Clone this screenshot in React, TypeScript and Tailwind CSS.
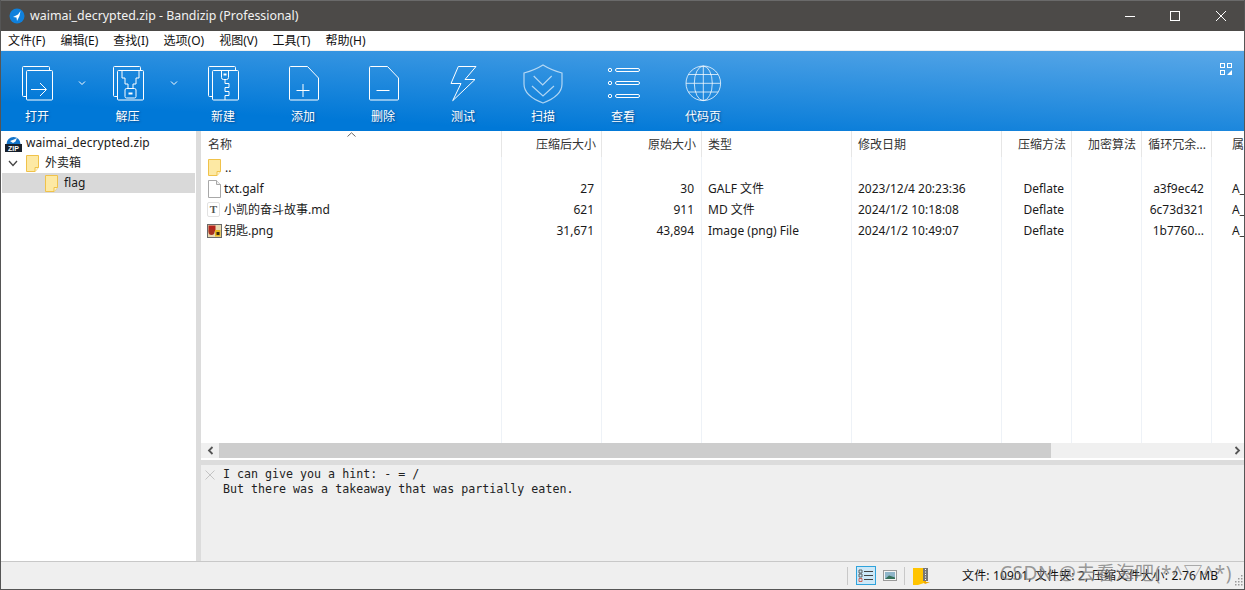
const menus = ["文件(F)", "编辑(E)", "查找(I)", "选项(O)", "视图(V)", "工具(T)", "帮助(H)"];

const sw = { fill: "none", stroke: "white", strokeWidth: 1 };

function OpenIcon() {
  return (
    <svg width="40" height="40" viewBox="0 0 40 40" {...sw}>
      <path d="M9 32.5H6.5a1 1 0 0 1-1-1V3.5a1 1 0 0 1 1-1h25a1 1 0 0 1 1 1V6" />
      <rect x="9.5" y="6.5" width="26" height="29.5" rx="1" />
      <path d="M14 25.5H29M23 19l6.5 6.5L23 32" />
    </svg>
  );
}

function ExtractIcon() {
  return (
    <svg width="40" height="40" viewBox="0 0 40 40" {...sw}>
      <path d="M9 32.5H6.5a1 1 0 0 1-1-1V3.5a1 1 0 0 1 1-1h25a1 1 0 0 1 1 1V6" />
      <rect x="9.5" y="6.5" width="26" height="29.5" rx="1" />
      <path d="M14 6.5v7.5h3v6h3v4M31 6.5v7.5h-3v6h-3v4" />
      <rect x="17" y="24.5" width="11" height="9.5" rx="1.5" />
      <path d="M20.5 29.5h4" strokeWidth="2" />
    </svg>
  );
}

function NewIcon() {
  return (
    <svg width="40" height="40" viewBox="0 0 40 40" {...sw}>
      <path d="M9 32.5H6.5a1 1 0 0 1-1-1V3.5a1 1 0 0 1 1-1h25a1 1 0 0 1 1 1V6" />
      <rect x="9.5" y="6.5" width="26" height="29.5" rx="1" />
      <path d="M18.5 6.5v7a2 2 0 0 0 2 2h3a2 2 0 0 0 2-2v-7" />
      <path d="M20.5 10.5h3" strokeWidth="2" />
      <path d="M22 15.5v4h4v4h-4v4h4v4h-4v4.5" />
    </svg>
  );
}

function PageIcon({ plus }: { plus?: boolean }) {
  return (
    <svg width="40" height="40" viewBox="0 0 40 40" {...sw}>
      <path d="M7.5 2.5H24.5L35.5 14V35a1 1 0 0 1-1 1H7.5a1 1 0 0 1-1-1V3.5a1 1 0 0 1 1-1z" />
      <path d="M13.5 26.5h13" />
      {plus && <path d="M20 20v13" />}
    </svg>
  );
}

function BoltIcon() {
  return (
    <svg width="40" height="40" viewBox="0 0 40 40" {...sw}>
      <path d="M15.3 2.5H33L22 15.5H32L9.7 36.7L18 19.5H8z" />
    </svg>
  );
}

function ShieldIcon() {
  return (
    <svg width="40" height="40" viewBox="0 0 40 40" fill="none" stroke="white" strokeOpacity="0.65" strokeWidth="1.2">
      <path d="M20 1Q28 6 39 9V20C39 30 28 36 20 39C12 36 1 30 1 20V9Q12 6 20 1z" />
      <path d="M10.7 12L19.7 21L28.7 12M9 22L20 32L31 22" />
    </svg>
  );
}

function ListIcon() {
  return (
    <svg width="40" height="40" viewBox="0 0 40 40" {...sw}>
      <circle cx="7" cy="6" r="1.7" />
      <circle cx="7" cy="19" r="1.7" />
      <circle cx="7" cy="32" r="1.7" />
      <rect x="12.5" y="4.5" width="24" height="3" rx="1.5" />
      <rect x="12.5" y="17.5" width="24" height="3" rx="1.5" />
      <rect x="12.5" y="30.5" width="24" height="3" rx="1.5" />
    </svg>
  );
}

function GlobeIcon() {
  return (
    <svg width="40" height="40" viewBox="0 0 40 40" fill="none" stroke="white" strokeOpacity="0.75" strokeWidth="1">
      <circle cx="20.3" cy="19.3" r="17.3" />
      <ellipse cx="20.3" cy="19.3" rx="9" ry="17.3" />
      <path d="M20.3 2V36.6M3 19.3H37.6M5.5 10.5H35M5.5 28H35" />
    </svg>
  );
}

function Chevron() {
  return (
    <svg width="8" height="6" viewBox="0 0 8 6" fill="none" stroke="white" strokeWidth="1">
      <path d="M1 1.5L4 4.5L7 1.5" />
    </svg>
  );
}

function ToolButton({ label, width, children }: { label: string; width: string; children: React.ReactNode }) {
  return (
    <div className={`flex h-full shrink-0 flex-col items-center pt-[13px] ${width}`}>
      {children}
      <span className="mt-[5px] text-[12px] leading-[16px] text-white [text-shadow:1px_1px_2px_rgba(0,40,90,0.6)]">
        {label}
      </span>
    </div>
  );
}

function Folder() {
  return (
    <svg width="13" height="17" viewBox="0 0 13 17" className="shrink-0">
      <path d="M.5.5h12v12l-3.5 4H.5z" fill="#fde9a4" stroke="#f0c24a" />
      <path d="M9 16.5v-4h3.5" fill="#fff4cc" stroke="#f0c24a" />
    </svg>
  );
}

function ZipIcon() {
  return (
    <svg width="17" height="17" viewBox="0 0 17 17" className="shrink-0">
      <path d="M1.5 9A7 7 0 0 1 15.5 9z" fill="#1273c9" />
      <path d="M5 6L9 4.5L12 3L10.5 6.5L8 8z" fill="white" />
      <rect x="0" y="9" width="17" height="8" fill="#17202c" />
      <text x="8.5" y="15.8" textAnchor="middle" fontSize="7" fontWeight="700" fill="white" fontFamily="Liberation Sans, sans-serif">
        ZIP
      </text>
    </svg>
  );
}

function PageFile() {
  return (
    <svg width="13" height="18" viewBox="0 0 13 18" className="shrink-0">
      <path d="M.5.5H8.5L12.5 4.5V17.5H.5z" fill="white" stroke="#a8a8a8" />
      <path d="M8.5.5V4.5H12.5" fill="#eee" stroke="#a8a8a8" />
    </svg>
  );
}

function TextFile() {
  return (
    <div className="flex h-[15px] w-[13px] shrink-0 items-center justify-center rounded-[2px] border border-[#e2e2e2] bg-white font-['Liberation_Serif',serif] text-[11px] font-bold leading-none text-[#555]">
      T
    </div>
  );
}

function ImageFile() {
  return (
    <svg width="15" height="14" viewBox="0 0 15 14" className="shrink-0">
      <rect x=".5" y=".5" width="14" height="13" fill="#e9d9b0" stroke="#6b6b6b" />
      <rect x="1.5" y="1.5" width="7" height="6" fill="#b4231c" />
      <circle cx="4.5" cy="8" r="3" fill="#a8321f" />
      <rect x="8" y="6" width="5.5" height="6.5" fill="#e8b820" />
      <rect x="9.5" y="8" width="3" height="3" fill="#3a2a10" />
    </svg>
  );
}

const rows = [
  { name: "..", icon: <Folder />, cls: "gap-[4px] pl-[7px]" },
  { name: "txt.galf", icon: <PageFile />, cls: "gap-[3px] pl-[7px]" },
  { name: "小凯的奋斗故事.md", icon: <TextFile />, cls: "gap-[4px] pl-[6px]" },
  { name: "钥匙.png", icon: <ImageFile />, cls: "gap-[2px] pl-[6px]" },
];

const columns = [
  { title: "压缩后大小", width: "w-[100px]", right: true, cells: ["", "27", "621", "31,671"] },
  { title: "原始大小", width: "w-[100px]", right: true, cells: ["", "30", "911", "43,894"] },
  { title: "类型", width: "w-[150px]", right: false, cells: ["", "GALF 文件", "MD 文件", "Image (png) File"] },
  {
    title: "修改日期",
    width: "w-[150px]",
    right: false,
    cells: ["", "2023/12/4 20:23:36", "2024/1/2 10:18:08", "2024/1/2 10:49:07"],
  },
  { title: "压缩方法", width: "w-[70px]", right: true, cells: ["", "Deflate", "Deflate", "Deflate"] },
  { title: "加密算法", width: "w-[70px]", right: true, cells: ["", "", "", ""] },
  { title: "循环冗余...", width: "w-[70px]", right: true, cells: ["", "a3f9ec42", "6c73d321", "1b7760..."] },
];

function FileColumns() {
  return (
    <div className="flex min-h-0 flex-1 overflow-hidden">
      <div className="relative flex w-[301px] shrink-0 flex-col">
        <div className="flex h-[26px] shrink-0 items-center border-r border-[#e6e6e6] pl-[7px] pt-[2px] text-[#333]">名称</div>
        <svg width="9" height="5" viewBox="0 0 9 5" fill="none" stroke="#666" className="absolute left-[146px] top-[1px]">
          <path d="M.5 4.5L4.5.8L8.5 4.5" />
        </svg>
        <div className="flex-1 border-r border-[#eef2f7]">
          {rows.map((r) => (
            <div key={r.name} className={`flex h-[21px] items-center ${r.cls}`}>
              {r.icon}
              <span>{r.name}</span>
            </div>
          ))}
        </div>
      </div>
      {columns.map((c) => (
        <div key={c.title} className={`flex shrink-0 flex-col ${c.width}`}>
          <div
            className={`flex h-[26px] shrink-0 items-center border-r border-[#e6e6e6] pt-[2px] text-[#333] ${
              c.right ? "justify-end pr-[5px]" : "pl-[6px]"
            }`}
          >
            {c.title}
          </div>
          <div className="flex-1 border-r border-[#eef2f7]">
            {c.cells.map((v, i) => (
              <div key={i} className={`flex h-[21px] items-center ${c.right ? "justify-end pr-[7px]" : "pl-[6px]"}`}>
                {v}
              </div>
            ))}
          </div>
        </div>
      ))}
      <div className="flex min-w-0 flex-1 flex-col overflow-hidden pl-[20px]">
        <div className="flex h-[26px] shrink-0 items-center whitespace-nowrap pt-[2px] text-[#333]">属性</div>
        {["", "A_", "A_", "A_"].map((v, i) => (
          <div key={i} className="flex h-[21px] items-center whitespace-nowrap">
            {v}
          </div>
        ))}
      </div>
    </div>
  );
}

function ScrollBar() {
  return (
    <div className="flex h-[15px] shrink-0 bg-[#f0f0f0]">
      <div className="flex w-[18px] items-center justify-center">
        <svg width="7" height="9" viewBox="0 0 7 9" fill="none" stroke="#555" strokeWidth="1.8">
          <path d="M5.5 1L2 4.5L5.5 8" />
        </svg>
      </div>
      <div className="w-[832px] bg-[#cdcdcd]" />
      <div className="flex flex-1 items-center justify-end pr-[3px]">
        <svg width="7" height="9" viewBox="0 0 7 9" fill="none" stroke="#555" strokeWidth="1.8">
          <path d="M1.5 1L5 4.5L1.5 8" />
        </svg>
      </div>
    </div>
  );
}

function StatusBar() {
  return (
    <div className="flex h-[28px] shrink-0 items-center border-t border-[#c8c8c8] bg-[#efefef] pl-[846px]">
      <div className="h-[18px] w-px bg-[#c8c8c8]" />
      <div className="ml-[8px] flex h-[19px] w-[20px] items-center justify-center border border-[#2fa3dc] bg-[#cde8f7]">
        <svg width="16" height="13" viewBox="0 0 16 13" fill="none" stroke="#444">
          <path d="M6 2.5h9M6 6.5h9M6 10.5h9" />
          <path d="M1 1h3v3h-3zM1 5h3v3h-3z" strokeWidth=".8" />
          <path d="M1 9.500h3v3h-3z" stroke="#c43" strokeWidth=".8" />
        </svg>
      </div>
      <svg width="14" height="11" viewBox="0 0 14 11" className="ml-[7px]">
        <rect x=".5" y=".5" width="13" height="10" fill="#f4f4f4" stroke="#9a9a9a" />
        <rect x="2" y="2" width="10" height="7" fill="#8fb5c9" />
        <path d="M2 9L6 5.500L12 7.500V9z" fill="#35705a" />
      </svg>
      <div className="ml-[7px] h-[18px] w-px bg-[#c8c8c8]" />
      <svg width="17" height="18" viewBox="0 0 17 18" className="ml-[8px]">
        <path d="M0 1H11V16L5 18H0z" fill="#ffc400" />
        <path d="M11 3H13V15H17L12 17L11 16z" fill="#f0a800" />
        <rect x="10" y="1" width="5" height="13" fill="#777" />
        <path d="M12.500 2v11" stroke="white" strokeDasharray="1 1.500" />
      </svg>
      <span className="ml-[32px] whitespace-nowrap tracking-[0.17px] text-[#111]">文件: 10901, 文件夹: 2, 压缩文件大小: 2.76 MB</span>
      <svg width="10" height="12" viewBox="0 0 10 12" fill="#9a9a9a" className="absolute bottom-[2px] right-[1px]">
        <rect x="8" y="0" width="1.500" height="1.500" />
        <rect x="8" y="3" width="1.500" height="1.500" />
        <rect x="5" y="3" width="1.500" height="1.500" />
        <rect x="8" y="6" width="1.500" height="1.500" />
        <rect x="5" y="6" width="1.500" height="1.500" />
        <rect x="2" y="6" width="1.500" height="1.500" />
        <rect x="8" y="9" width="1.500" height="1.500" />
        <rect x="5" y="9" width="1.500" height="1.500" />
        <rect x="2" y="9" width="1.500" height="1.500" />
      </svg>
    </div>
  );
}

export default function App() {
  return (
    <div className="relative flex h-[590px] w-[1245px] flex-col overflow-hidden border-x border-b border-[#555] bg-white font-['Noto_Sans','Noto_Sans_CJK_SC',sans-serif] text-[12px] text-[#1a1a1a]">
      {/* title bar */}
      <div className="flex h-[31px] shrink-0 items-center border-t border-[#6a6a6a] bg-[#4c4a48] pl-[8px] text-[#f2f2f2]">
        <svg width="16" height="16" viewBox="0 0 16 16">
          <circle cx="8" cy="8" r="7.500" fill="#0f80dc" />
          <path d="M4 9L9 6.500L11.500 3L10.500 8L8 13L7.500 9.500z" fill="white" />
        </svg>
        <span className="ml-[5px] whitespace-nowrap text-[12.4px]">waimai_decrypted.zip - Bandizip (Professional)</span>
        <div className="ml-auto flex items-center">
          <svg width="46" height="12" viewBox="0 0 46 12" stroke="white" fill="none">
            <path d="M19 6.500H29" />
          </svg>
          <svg width="46" height="12" viewBox="0 0 46 12" stroke="white" fill="none">
            <rect x="18.500" y="1.500" width="9" height="9" />
          </svg>
          <svg width="46" height="12" viewBox="0 0 46 12" stroke="white" fill="none">
            <path d="M18 1L28 11M28 1L18 11" />
          </svg>
        </div>
      </div>

      {/* menu */}
      <div className="flex h-[19px] shrink-0 items-center gap-[15px] pl-[7px] text-[#111]">
        {menus.map((m) => (
          <span key={m} className="whitespace-nowrap">
            {m}
          </span>
        ))}
      </div>
      <div className="h-px shrink-0 bg-[#efefef]" />

      {/* toolbar */}
      <div className="relative flex h-[80px] shrink-0 bg-[linear-gradient(3deg,#0078d7_20%,#5aa8e8_100%)]">
        <ToolButton label="打开" width="w-[72px]">
          <OpenIcon />
        </ToolButton>
        <div className="flex w-[17px] shrink-0 justify-center pt-[29px]">
          <Chevron />
        </div>
        <ToolButton label="解压" width="w-[75px]">
          <ExtractIcon />
        </ToolButton>
        <div className="flex w-[18px] shrink-0 justify-center pt-[29px]">
          <Chevron />
        </div>
        <ToolButton label="新建" width="w-[80px]">
          <NewIcon />
        </ToolButton>
        <ToolButton label="添加" width="w-[80px]">
          <PageIcon plus />
        </ToolButton>
        <ToolButton label="删除" width="w-[80px]">
          <PageIcon />
        </ToolButton>
        <ToolButton label="测试" width="w-[80px]">
          <BoltIcon />
        </ToolButton>
        <ToolButton label="扫描" width="w-[80px]">
          <ShieldIcon />
        </ToolButton>
        <ToolButton label="查看" width="w-[80px]">
          <ListIcon />
        </ToolButton>
        <ToolButton label="代码页" width="w-[80px]">
          <GlobeIcon />
        </ToolButton>
        <svg width="12" height="12" viewBox="0 0 12 12" fill="none" stroke="white" className="absolute right-[12px] top-[12px]">
          <rect x=".5" y=".5" width="4" height="4" />
          <rect x="7.500" y=".5" width="4" height="4" />
          <rect x=".5" y="7.500" width="4" height="4" />
          <path d="M7 12L12 7V12z" fill="white" stroke="none" />
        </svg>
      </div>

      {/* body */}
      <div className="flex min-h-0 flex-1">
        <div className="w-[195px] shrink-0 pl-px pr-px pt-[2px]">
          <div className="flex h-[20px] items-center gap-[4px] pl-[3px]">
            <ZipIcon />
            <span className="tracking-[0.1px]">waimai_decrypted.zip</span>
          </div>
          <div className="flex h-[20px] items-center pl-[6px]">
            <svg width="10" height="7" viewBox="0 0 10 7" fill="none" stroke="#444" strokeWidth="1.300">
              <path d="M1 1L5 5.500L9 1" />
            </svg>
            <span className="ml-[8px]">
              <Folder />
            </span>
            <span className="ml-[6px]">外卖箱</span>
          </div>
          <div className="flex h-[20px] items-center bg-[#d9d9d9] pl-[43px]">
            <Folder />
            <span className="ml-[6px]">flag</span>
          </div>
        </div>
        <div className="w-[5px] shrink-0 bg-[#dcdcdc]" />
        <div className="flex min-w-0 flex-1 flex-col">
          <FileColumns />
          <ScrollBar />
          <div className="h-[2px] shrink-0 bg-white" />
          <div className="h-[5px] shrink-0 bg-[#dcdcdc]" />
          <div className="flex h-[96px] shrink-0 bg-[#efefef] pl-[4px] pt-[2px]">
            <svg width="10" height="10" viewBox="0 0 10 10" stroke="#c4c4c4" fill="none" className="mt-[3px] shrink-0">
              <path d="M.5.5L9.500 9.500M9.500.5L.5 9.500" />
            </svg>
            <div className="ml-[8px] whitespace-pre font-['DejaVu_Sans_Mono',monospace] text-[11.65px] leading-[15px] text-[#222]">
              {"I can give you a hint: - = /\nBut there was a takeaway that was partially eaten."}
            </div>
          </div>
        </div>
      </div>

      <StatusBar />

      {/* watermark */}
      <span className="absolute bottom-[4px] right-[12px] whitespace-nowrap text-[19px] leading-[24px] tracking-[0.6px] text-[#7a7a7a]/75">
        CSDN @去看海吧(*^▽^*)
      </span>
    </div>
  );
}
